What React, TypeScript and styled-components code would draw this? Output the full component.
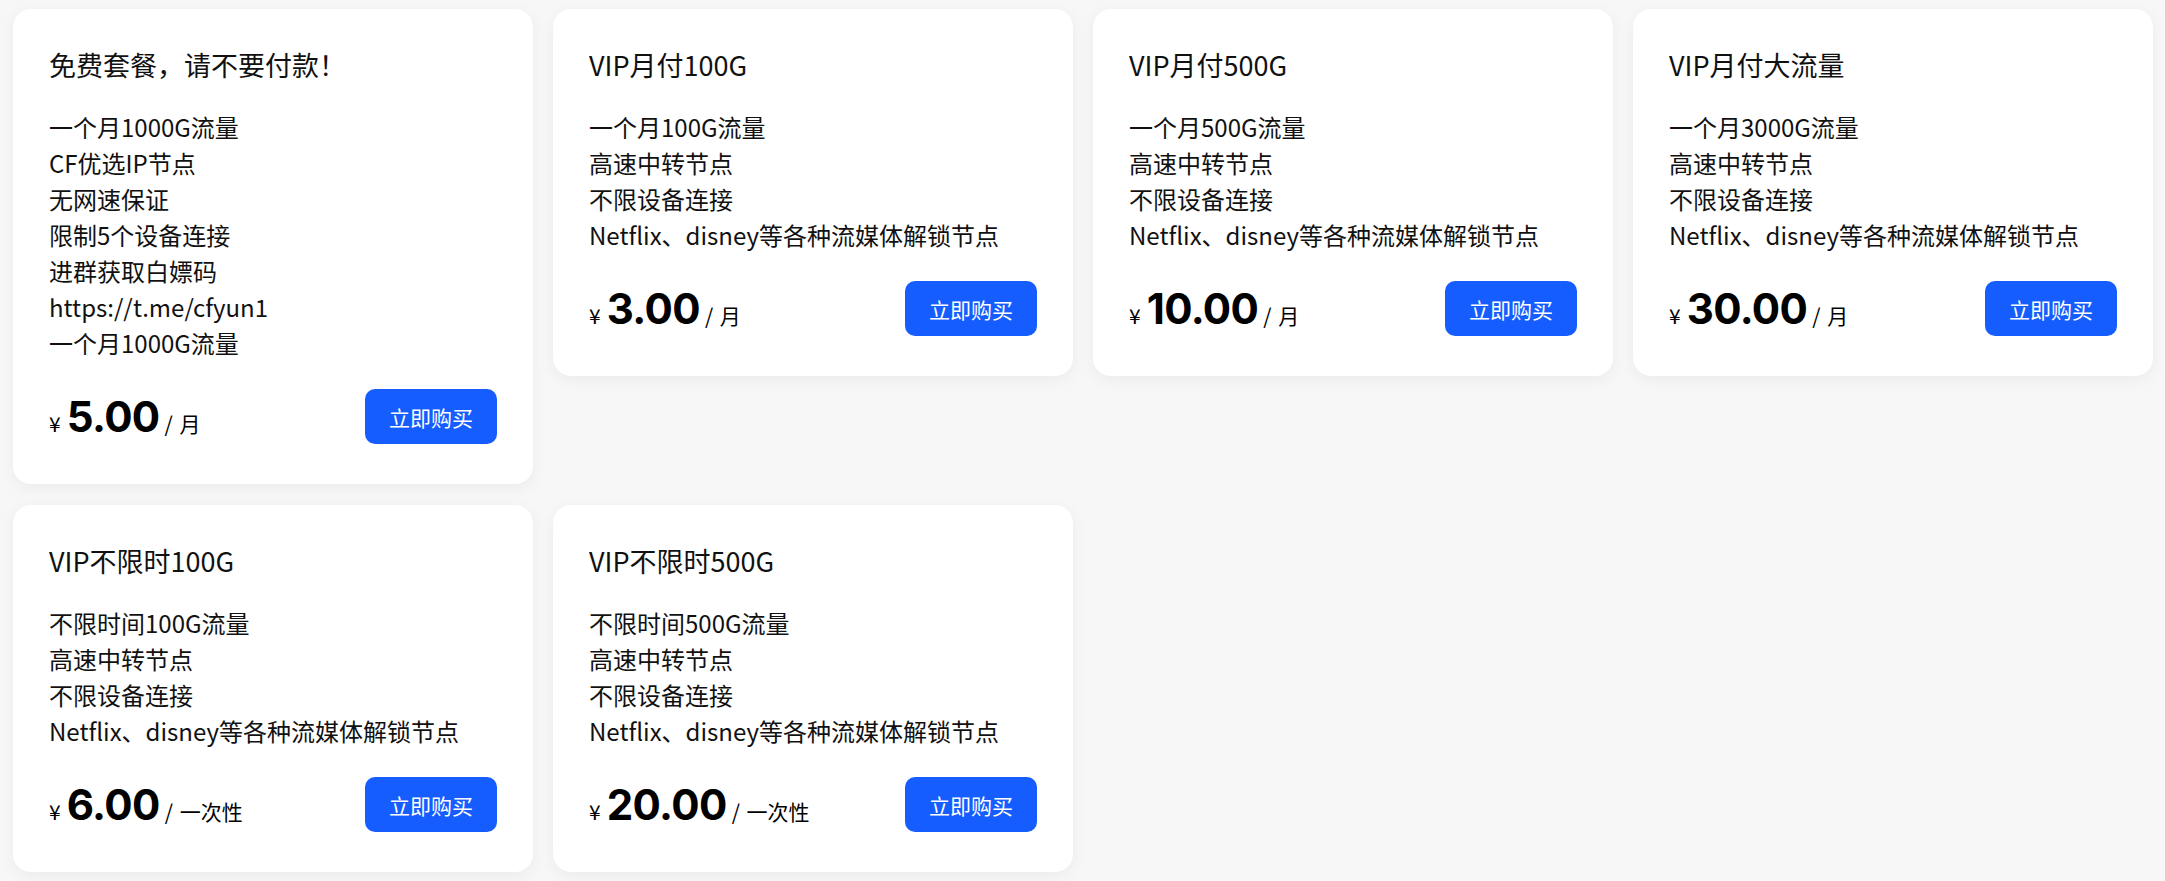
import React from "react";
import styled, { createGlobalStyle } from "styled-components";

const GlobalStyle = createGlobalStyle`
  html, body {
    margin: 0;
    padding: 0;
    background: #f7f7f7;
  }
  body {
    font-family: "Noto Sans CJK SC", "Noto Sans", sans-serif;
    color: #111;
  }
`;

const Page = styled.div`
  padding: 9px 12px 9px 13px;
  display: grid;
  grid-template-columns: repeat(4, 1fr);
  column-gap: 20px;
  row-gap: 21px;
  align-items: start;
`;

const Card = styled.div`
  background: #fff;
  border-radius: 18px;
  box-shadow: 0 4px 16px rgba(0, 0, 0, 0.05);
  padding: 36px;
  display: flex;
  flex-direction: column;
`;

const Title = styled.div`
  font-size: 27px;
  line-height: 40px;
  color: #111;
  margin-bottom: 24px;
`;

const Features = styled.div`
  font-size: 24px;
  line-height: 36px;
  color: #111;
`;

const Feature = styled.div`
  white-space: nowrap;
`;

const PriceRow = styled.div`
  margin-top: 24px;
  height: 63px;
  display: flex;
  align-items: center;
  justify-content: space-between;
`;

const Price = styled.div`
  display: flex;
  align-items: baseline;
  color: #000;
`;

const Currency = styled.span`
  font-family: "Noto Sans CJK SC", sans-serif;
  font-size: 21px;
  line-height: 1;
  margin-right: 6px;
`;

const Amount = styled.span`
  font-family: "Inter", "Liberation Sans", sans-serif;
  font-weight: 700;
  font-size: 42px;
  line-height: 63px;
  letter-spacing: -0.6px;
`;

const Unit = styled.span`
  font-family: "Noto Sans CJK SC", sans-serif;
  font-size: 21px;
  line-height: 1;
  margin-left: 5px;
  white-space: pre;
  word-spacing: 2px;
`;

const BuyButton = styled.button`
  height: 55px;
  padding: 0 24px;
  border: none;
  border-radius: 10px;
  background: #165dff;
  color: #fff;
  font-family: "Noto Sans CJK SC", sans-serif;
  font-size: 21px;
  cursor: pointer;
`;

type Plan = {
  title: string;
  features: string[];
  price: string;
  unit: string;
};

const common = ["高速中转节点", "不限设备连接", "Netflix、disney等各种流媒体解锁节点"];

const plans: Plan[] = [
  {
    title: "免费套餐，请不要付款！",
    features: [
      "一个月1000G流量",
      "CF优选IP节点",
      "无网速保证",
      "限制5个设备连接",
      "进群获取白嫖码",
      "https://t.me/cfyun1",
      "一个月1000G流量",
    ],
    price: "5.00",
    unit: "月",
  },
  { title: "VIP月付100G", features: ["一个月100G流量", ...common], price: "3.00", unit: "月" },
  { title: "VIP月付500G", features: ["一个月500G流量", ...common], price: "10.00", unit: "月" },
  { title: "VIP月付大流量", features: ["一个月3000G流量", ...common], price: "30.00", unit: "月" },
  { title: "VIP不限时100G", features: ["不限时间100G流量", ...common], price: "6.00", unit: "一次性" },
  { title: "VIP不限时500G", features: ["不限时间500G流量", ...common], price: "20.00", unit: "一次性" },
];

export default function App() {
  return (
    <>
      <GlobalStyle />
      <Page>
        {plans.map((p, i) => (
          <Card key={i}>
            <Title>{p.title}</Title>
            <Features>
              {p.features.map((f, j) => (
                <Feature key={j}>{f}</Feature>
              ))}
            </Features>
            <PriceRow>
              <Price>
                <Currency>¥</Currency>
                <Amount>{p.price}</Amount>
                <Unit>{`/ ${p.unit}`}</Unit>
              </Price>
              <BuyButton>立即购买</BuyButton>
            </PriceRow>
          </Card>
        ))}
      </Page>
    </>
  );
}
